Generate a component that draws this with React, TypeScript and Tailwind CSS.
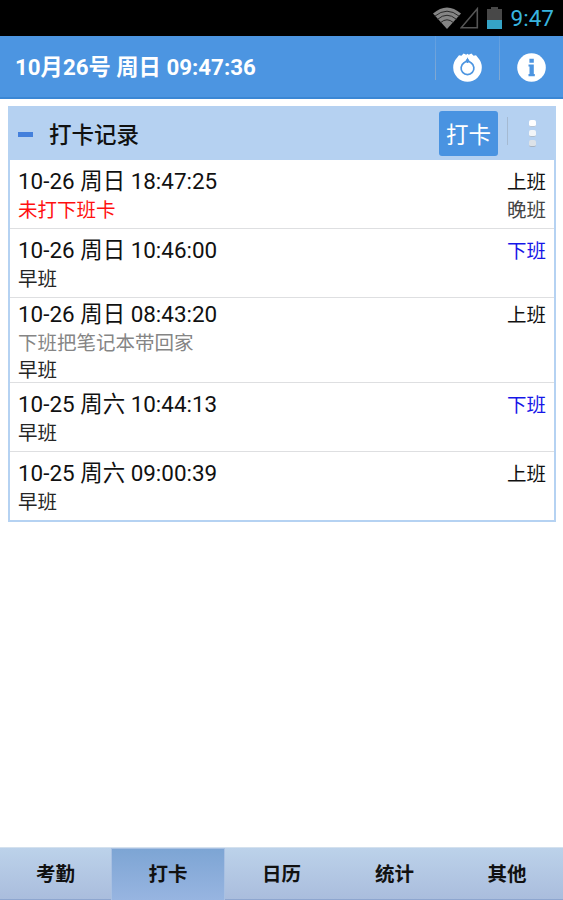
import { clsx } from "clsx";

interface PunchRecord {
  time: string;
  type: string;
  off?: boolean;
  warning?: string;
  note?: string;
  shift: string;
}

const records: PunchRecord[] = [
  { time: "10-26 周日 18:47:25", type: "上班", warning: "未打下班卡", shift: "晚班" },
  { time: "10-26 周日 10:46:00", type: "下班", off: true, shift: "早班" },
  { time: "10-26 周日 08:43:20", type: "上班", note: "下班把笔记本带回家", shift: "早班" },
  { time: "10-25 周六 10:44:13", type: "下班", off: true, shift: "早班" },
  { time: "10-25 周六 09:00:39", type: "上班", shift: "早班" },
];

const tabs = ["考勤", "打卡", "日历", "统计", "其他"];

function StatusBar() {
  return (
    <div className="flex h-9 shrink-0 items-center justify-end bg-black pr-[9px]">
      {/* Wifi */}
      <svg className="h-[22px] w-7" viewBox="0 0 28 22" fill="none">
        <path d="M0 6.5Q14-5.5 28 6.5L14 22Z" fill="#858585" />
        <path d="M1.8 9.2Q14-.8 26.2 9.2M4.6 12.3Q14 4.2 23.4 12.3M7.6 15.6Q14 10 20.4 15.6" stroke="#292929" strokeWidth="1" />
      </svg>
      {/* Signal */}
      <svg className="-ml-px h-[22px] w-[19px]" viewBox="0 0 19 22" fill="none">
        <path d="M17.3 1.8V20.7H1.2Z" stroke="#555" strokeWidth="1.6" />
      </svg>
      {/* Battery */}
      <svg className="ml-2 h-[22px] w-[15px]" viewBox="0 0 15 22">
        <path d="M0 2h4V0h7v2h4v11H0Z" fill="#484848" />
        <path d="M0 13h15v9H0Z" fill="#35a3c6" />
      </svg>
      <span className="ml-[9px] text-[22.5px] leading-9 text-[#38b4df]">9:47</span>
    </div>
  );
}

function TitleBar() {
  return (
    <div className="flex h-[63px] shrink-0 border-b-2 border-[#3b87d4] bg-[#4c95e1]">
      <h1 className="flex-1 pl-[15px] text-[22.3px] leading-[62px] font-bold text-white">10月26号 周日 09:47:36</h1>
      <button className="flex w-16 justify-center pt-[17px]">
        <span className="-mt-[17px] h-[44px] w-px bg-linear-to-b from-[#5c9ee3] to-[#85a9cf]" />
        <svg className="mx-auto h-[29px] w-[29px]" viewBox="0 0 29 29">
          <path d="M4 4.7 6 2.2 8.4 2.7 10.6.6 13.2 1.7 14.5.8 15.8 1.7 18.4.6 20.6 2.7 23 2.2 25 4.7A14.3 14.3 0 1 1 4 4.7Z" fill="white" />
          <path d="M14.5 6.6C15.2 8.5 16.5 9 18 9.8A6.4 6.4 0 1 1 11 9.8C12.5 9 13.8 8.5 14.5 6.6Z" fill="white" stroke="#4c95e1" strokeWidth="1.7" />
          <path d="M14.5 6v4" stroke="#4c95e1" strokeWidth="2" />
        </svg>
      </button>
      <button className="flex w-16 justify-center pt-[17px]">
        <span className="-mt-[17px] h-[44px] w-px bg-linear-to-b from-[#5c9ee3] to-[#85a9cf]" />
        <svg className="mx-auto h-[29px] w-[29px]" viewBox="0 0 29 29">
          <circle cx="14.5" cy="14.5" r="14.3" fill="white" />
          <path d="M12.4 5.8h4.4v4h-4.4ZM11.5 11.4h5.3v9.6h1v2.2h-6.3V21h1v-7.4h-1Z" fill="#4c95e1" />
        </svg>
      </button>
    </div>
  );
}

function RecordRow({ record }: { record: PunchRecord }) {
  return (
    <li
      className={clsx(
        "flex justify-between border-[#dedfe1] px-2 not-last:border-b last:h-[68px]",
        record.note ? "h-[85px] pt-[2px]" : "h-[69px] pt-[7px]"
      )}
    >
      <div className="flex flex-col">
        <span className="text-[22.45px] leading-7 text-[#111]">{record.time}</span>
        {record.warning && <span className="pt-[2px] text-[19.5px] leading-7 text-[#ff1010]">{record.warning}</span>}
        {record.note && <span className="pt-[2px] text-[19.5px] leading-7 text-[#858585]">{record.note}</span>}
        {!record.warning && (
          <span className={clsx("text-[19.5px] text-[#252525]", record.note ? "leading-[25px]" : "pt-[2px] leading-7")}>
            {record.shift}
          </span>
        )}
      </div>
      <div className="flex flex-col pt-[2px] text-right text-[19.5px] leading-7">
        <span className={record.off ? "text-[#1616e8]" : "text-[#111]"}>{record.type}</span>
        {record.warning && <span className="text-[#444]">{record.shift}</span>}
      </div>
    </li>
  );
}

function RecordPanel() {
  return (
    <section className="mx-2 mt-[7px] w-[548px] border-2 border-t-0 border-[#b5d2f2] bg-white">
      <div className="flex h-[54px] items-center bg-[#b5d1f1]">
        <span className="mt-[3px] ml-2 h-[5px] w-[15px] bg-[#4480dc]" />
        <h2 className="ml-4 flex-1 pt-1 text-[22.5px] leading-[50px] font-medium text-[#111]">打卡记录</h2>
        <button className="h-[45px] w-[59px] rounded-[3px] bg-[#4993e1] pt-[3px] text-[22.5px] leading-[42px] text-white">打卡</button>
        <span className="-mt-1 ml-[9px] h-[28px] w-px bg-[#a5bad2]" />
        <div className="mr-[18px] ml-[21px] flex flex-col gap-[3px]">
          <span className="h-[7px] w-[7px] rounded-[2px] border-b border-[#b8c5d4] bg-white" />
          <span className="h-[7px] w-[7px] rounded-[2px] border-b border-[#aebdcd] bg-[#f2f5f8]" />
          <span className="h-[7px] w-[7px] rounded-[2px] border-b border-[#a6b3c2] bg-[#dce2e8]" />
        </div>
      </div>
      <ul>
        {records.map((record) => (
          <RecordRow key={record.time} record={record} />
        ))}
      </ul>
    </section>
  );
}

function TabBar() {
  return (
    <nav className="mt-auto grid h-[53px] grid-cols-[111px_114px_113px_113px_112px] border-t border-b border-t-[#d4e1ee] border-b-[#8ea6cf] bg-linear-to-b from-[#bcd2ea] to-[#aabddd]">
      {tabs.map((tab) => (
        <button
          key={tab}
          className={clsx(
            "text-[19.5px] leading-[52px] font-bold text-[#111]",
            tab === "打卡" && "border-x border-t border-[#a8c0e2] bg-linear-to-b from-[#7da5d4] to-[#98b5e1]"
          )}
        >
          {tab}
        </button>
      ))}
    </nav>
  );
}

export default function App() {
  return (
    <div className="flex h-[900px] w-[563px] flex-col overflow-hidden bg-white font-['Roboto','Noto_Sans_CJK_SC',sans-serif]">
      <StatusBar />
      <TitleBar />
      <RecordPanel />
      <TabBar />
    </div>
  );
}
